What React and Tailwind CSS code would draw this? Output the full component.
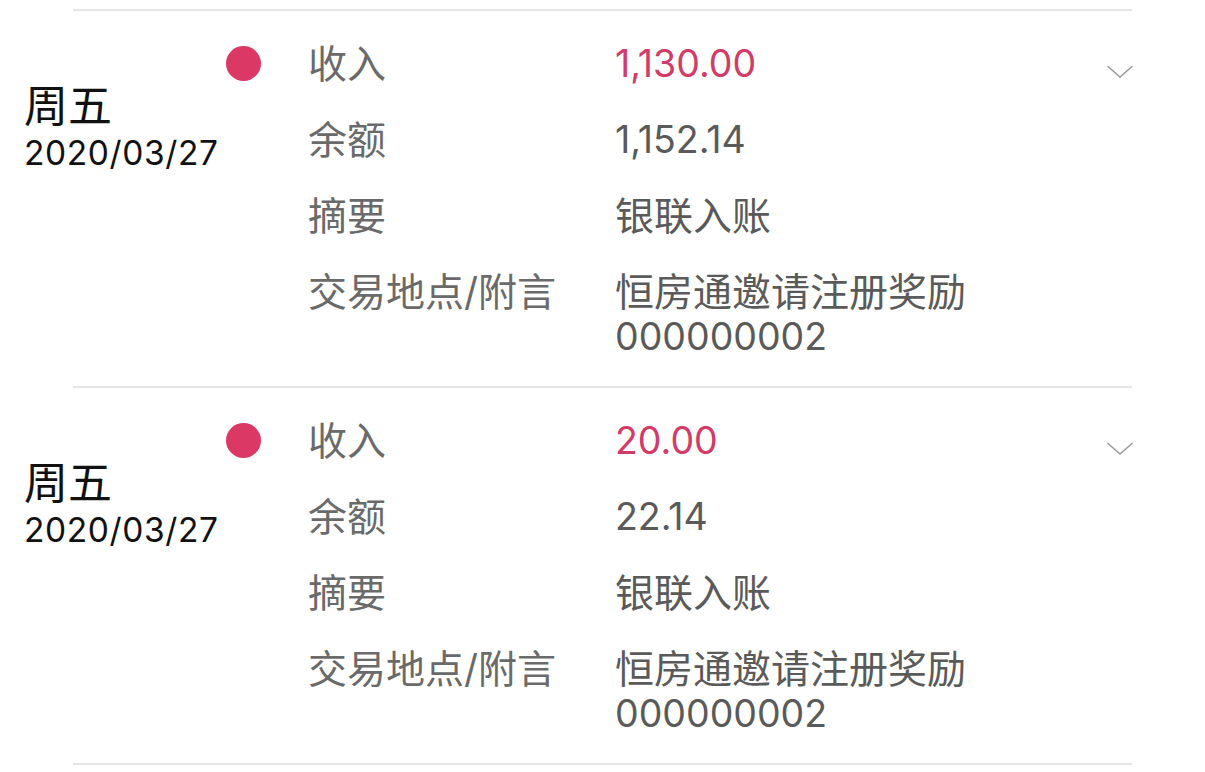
import React from "react";

const items = [
  { amount: "1,130.00", balance: "1,152.14" },
  { amount: "20.00", balance: "22.14" },
];

const FONT = { fontFamily: '"Inter", "Noto Sans CJK SC", sans-serif' };

function Chevron() {
  return (
    <svg width="26" height="14" viewBox="0 0 26 14" fill="none">
      <path d="M1 1.5 L13 12 L25 1.5" stroke="#9a9a9a" strokeWidth="1.6" strokeLinecap="round" strokeLinejoin="round" />
    </svg>
  );
}

function Item({ amount, balance }) {
  return (
    <div>
      <div className="flex">
        <div className="w-[226px] pl-[24px] pt-[70px] text-[#111]">
          <div className="text-[44px] leading-[50px]">周五</div>
          <div className="text-[33.5px] leading-[45px] tracking-[0.6px]">2020/03/27</div>
        </div>
        <div className="w-[35px] pt-[35px]">
          <div className="h-[35px] w-[35px] rounded-full bg-[#db3866]" />
        </div>
        <div className="ml-[47px] flex flex-1 flex-col gap-[31px] pt-[30px] pb-[27px] text-[39px] leading-[45px]">
          <div className="flex">
            <div className="w-[307px] text-[#6a6a6a]">收入</div>
            <div className="text-[37.5px] text-[#d23b68]">{amount}</div>
          </div>
          <div className="flex">
            <div className="w-[307px] text-[#6a6a6a]">余额</div>
            <div className="text-[37.5px] text-[#5a5a5a]">{balance}</div>
          </div>
          <div className="flex">
            <div className="w-[307px] text-[#6a6a6a]">摘要</div>
            <div className="text-[#5a5a5a]">银联入账</div>
          </div>
          <div className="flex">
            <div className="w-[307px] text-[#6a6a6a]">交易地点/附言</div>
            <div className="text-[#5a5a5a]">
              <div>恒房通邀请注册奖励</div>
              <div className="text-[37.5px]">000000002</div>
            </div>
          </div>
        </div>
        <div className="mr-[72px] pt-[54px]">
          <Chevron />
        </div>
      </div>
      <div className="ml-[73px] h-[2px] w-[1059px] bg-[#e6e6e6]" />
    </div>
  );
}

export default function App() {
  return (
    <div className="h-[772px] w-[1205px] overflow-hidden bg-white pt-[9px]" style={FONT}>
      <div className="ml-[73px] h-[2px] w-[1059px] bg-[#e6e6e6]" />
      {items.map((it, i) => (
        <Item key={i} {...it} />
      ))}
    </div>
  );
}
